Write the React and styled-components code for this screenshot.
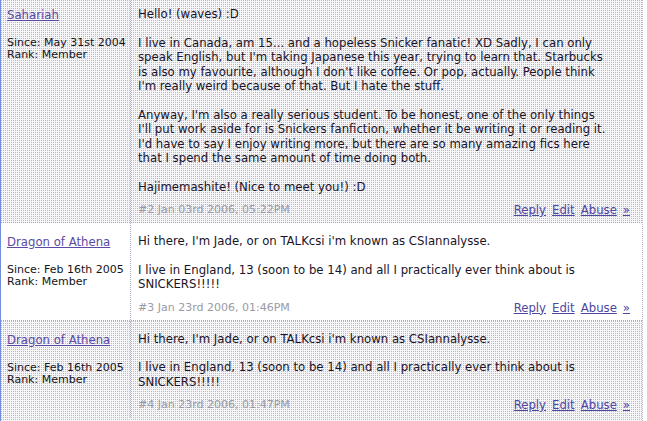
import React from "react";
import styled, { createGlobalStyle, css } from "styled-components";

const GlobalStyle = createGlobalStyle`
  html, body { margin: 0; padding: 0; background: #ffffff; }
  body { font-family: "DejaVu Sans Condensed", "DejaVu Sans", sans-serif; }
`;

const dotted = css`
  background-color: #f6f6f8;
  background-image: conic-gradient(from 270deg at 1px 1px, #b8b8c8 90deg, transparent 0);
  background-size: 2px 2px;
`;

const Board = styled.div`
  width: 641px;
  margin-top: -4px;
  border-left: 1px solid #6f8fdc;
  border-right: 1px dotted #b8b8c8;
`;

const Post = styled.div`
  display: grid;
  grid-template-columns: 130px 1fr;
  border-bottom: 1px dotted #a8a8bc;
  ${(p) => (p.$shaded ? dotted : "background: #ffffff;")}
  &:last-child {
    border-bottom: none;
    padding-bottom: 12px;
  }
`;

const Author = styled.div`
  padding: 11px 4px 4px 6px;
  border-right: 1px dotted #b0b0c4;
`;

const UserLink = styled.a`
  display: block;
  font-size: 13px;
  line-height: 15px;
  color: #5a4aa4;
  text-decoration: underline;
`;

const Meta = styled.div`
  margin-top: 15px;
  font-family: "DejaVu Sans", sans-serif;
  font-size: 11px;
  line-height: 12px;
  color: #141420;
`;

const Body = styled.div`
  padding: 11px 12px 5px 7px;
  display: flex;
  flex-direction: column;
`;

const Para = styled.p`
  margin: 0 0 14px 0;
  font-size: 13px;
  line-height: 14.5px;
  color: #1a1428;
  white-space: nowrap;
  &:last-of-type { margin-bottom: 8px; }
`;

const Footer = styled.div`
  display: flex;
  justify-content: space-between;
  align-items: center;
  height: 15px;
  line-height: 15px;
`;

const Stamp = styled.span`
  font-family: "DejaVu Sans", sans-serif;
  font-size: 11px;
  color: #9a9aa4;
`;

const Actions = styled.div`
  display: flex;
  gap: 6px;
  font-size: 13px;
  line-height: 15px;
`;

const ActionLink = styled.a`
  color: #4f47a0;
  text-decoration: underline;
`;

const posts = [
  {
    shaded: true,
    user: "Sahariah",
    since: "May 31st 2004",
    stamp: "#2 Jan 03rd 2006, 05:22PM",
    paras: [
      ["Hello! (waves) :D"],
      [
        "I live in Canada, am 15... and a hopeless Snicker fanatic! XD Sadly, I can only",
        "speak English, but I'm taking Japanese this year, trying to learn that. Starbucks",
        "is also my favourite, although I don't like coffee. Or pop, actually. People think",
        "I'm really weird because of that. But I hate the stuff.",
      ],
      [
        "Anyway, I'm also a really serious student. To be honest, one of the only things",
        "I'll put work aside for is Snickers fanfiction, whether it be writing it or reading it.",
        "I'd have to say I enjoy writing more, but there are so many amazing fics here",
        "that I spend the same amount of time doing both.",
      ],
      ["Hajimemashite! (Nice to meet you!) :D"],
    ],
  },
  {
    shaded: false,
    user: "Dragon of Athena",
    since: "Feb 16th 2005",
    stamp: "#3 Jan 23rd 2006, 01:46PM",
    paras: [
      ["Hi there, I'm Jade, or on TALKcsi i'm known as CSIannalysse."],
      [
        "I live in England, 13 (soon to be 14) and all I practically ever think about is",
        "SNICKERS!!!!!",
      ],
    ],
  },
  {
    shaded: true,
    user: "Dragon of Athena",
    since: "Feb 16th 2005",
    stamp: "#4 Jan 23rd 2006, 01:47PM",
    paras: [
      ["Hi there, I'm Jade, or on TALKcsi i'm known as CSIannalysse."],
      [
        "I live in England, 13 (soon to be 14) and all I practically ever think about is",
        "SNICKERS!!!!!",
      ],
    ],
  },
];

export default function App() {
  return (
    <>
      <GlobalStyle />
      <Board>
        {posts.map((p, i) => (
          <Post key={i} $shaded={p.shaded}>
            <Author>
              <UserLink href="#">{p.user}</UserLink>
              <Meta>
                Since: {p.since}
                <br />
                Rank: Member
              </Meta>
            </Author>
            <Body>
              {p.paras.map((lines, j) => (
                <Para key={j}>
                  {lines.map((l, k) => (
                    <React.Fragment key={k}>
                      {k > 0 && <br />}
                      {l}
                    </React.Fragment>
                  ))}
                </Para>
              ))}
              <Footer>
                <Stamp>{p.stamp}</Stamp>
                <Actions>
                  <ActionLink href="#">Reply</ActionLink>
                  <ActionLink href="#">Edit</ActionLink>
                  <ActionLink href="#">Abuse</ActionLink>
                  <ActionLink href="#">»</ActionLink>
                </Actions>
              </Footer>
            </Body>
          </Post>
        ))}
      </Board>
    </>
  );
}
